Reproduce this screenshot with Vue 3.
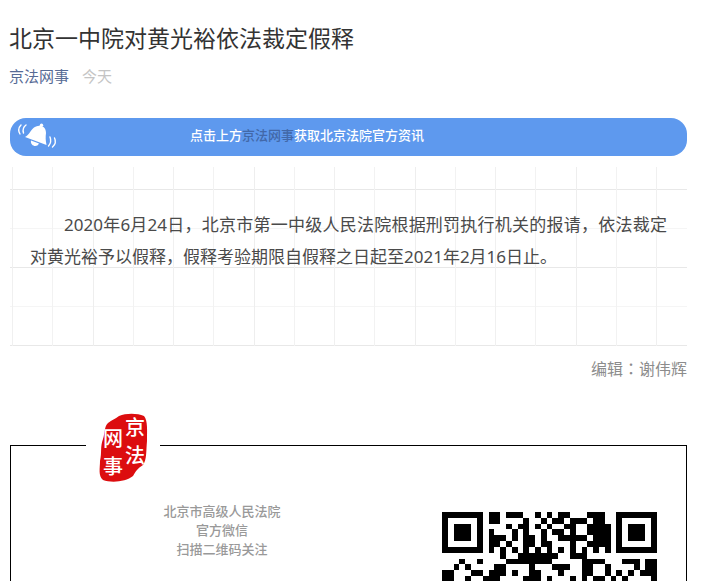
<template>
  <main class="article">
    <h1 class="title">北京一中院对黄光裕依法裁定假释</h1>
    <div class="meta">
      <a href="#" class="account">京法网事</a>
      <span class="date">今天</span>
    </div>

    <div class="banner">
      <svg class="bell" viewBox="0 0 42 30" aria-hidden="true">
        <g fill="#fff">
          <circle cx="24.5" cy="3.2" r="1.7" />
          <path d="M8 15 C13 13 13 7 19 4.5 C24 2.5 29 5 29 11 C28.5 15 28.5 18 29.5 23 Z" />
          <path d="M14 18.5 L22 21.5 C20 26 13 24 14 18.5 Z" />
        </g>
        <g fill="none" stroke="#fff" stroke-width="1.4" stroke-linecap="round">
          <path d="M4 3 Q0 7 3 12" />
          <path d="M9 3 Q5 6 6.5 11" />
          <path d="M33 15 Q35 20 31.5 24" />
          <path d="M37.5 16 Q40 21 35.5 25" />
        </g>
      </svg>
      <p class="banner-text">点击上方<a href="#">京法网事</a>获取北京法院官方资讯</p>
    </div>

    <section class="content">
      <p>
        2020年6月24日，北京市第一中级人民法院根据刑罚执行机关的报请，依法裁定对黄光裕予以假释，假释考验期限自假释之日起至2021年2月16日止。
      </p>
    </section>

    <p class="editor">编辑：谢伟辉</p>

    <section class="card">
      <div class="seal">
        <svg viewBox="0 0 48 70" role="img" aria-label="京法网事">
          <path
            d="M20 3 C27 0 38 0 45 3 C49 8 48 18 48 28 C47 38 48 46 44 52 C39 55 37 58 34 63 C27 69 12 70 4 67 C-1 63 1 55 1 48 C3 40 1 34 4 26 C6 20 5 14 9 10 C13 7 16 6 20 3 Z"
            fill="#dc0d0f"
          />
          <g class="seal-text">
            <text x="26" y="22">京</text>
            <text x="26" y="50">法</text>
            <text x="4" y="33">网</text>
            <text x="4" y="61">事</text>
          </g>
        </svg>
      </div>

      <div class="card-body">
        <p class="card-text">
          <span v-for="line in cardLines" :key="line">{{ line }}</span>
        </p>
        <div class="qr-box">
          <svg class="qr" viewBox="0 0 37 12" shape-rendering="crispEdges" role="img" aria-label="二维码">
            <path :d="qrPath" fill="#000" />
          </svg>
        </div>
      </div>
    </section>
  </main>
</template>

<script setup>
import { computed } from 'vue';

const cardLines = ['北京市高级人民法院', '官方微信', '扫描二维码关注'];

// dark modules of each row, by column
const qrRows = [
  [0, 1, 2, 3, 4, 5, 6, 8, 9, 11, 12, 13, 16, 18, 20, 21, 25, 26, 27, 30, 31, 32, 33, 34, 35, 36],
  [0, 6, 8, 9, 14, 17, 19, 20, 22, 23, 24, 26, 27, 30, 36],
  [0, 2, 3, 4, 6, 11, 13, 14, 16, 18, 21, 22, 25, 26, 27, 28, 30, 32, 33, 34, 36],
  [0, 2, 3, 4, 6, 8, 12, 14, 17, 19, 20, 22, 25, 26, 27, 28, 30, 32, 33, 34, 36],
  [0, 2, 3, 4, 6, 8, 9, 10, 12, 14, 15, 17, 20, 21, 22, 23, 24, 26, 27, 28, 30, 32, 33, 34, 36],
  [0, 6, 8, 9, 11, 14, 15, 17, 18, 22, 25, 26, 27, 28, 30, 36],
  [0, 1, 2, 3, 4, 5, 6, 8, 10, 12, 14, 16, 18, 20, 22, 24, 26, 28, 30, 31, 32, 33, 34, 35, 36],
  [10, 13, 14, 15, 16, 17, 18, 19, 22, 23, 24],
  [3, 6, 11, 12, 13, 14, 15, 16, 17, 18, 24, 25, 26, 27, 31, 32, 33, 35, 36],
  [2, 4, 9, 10, 15, 19, 20, 21, 24, 25, 28, 33, 35, 36],
  [0, 1, 5, 6, 8, 9, 10, 12, 15, 16, 20, 24, 25, 28, 30, 32, 34, 35, 36],
  [0, 1, 4, 7, 8, 9, 14, 15, 16, 18, 22, 24, 26, 27, 29, 31, 36],
];

const qrPath = computed(() =>
  qrRows.map((cols, y) => cols.map((x) => `M${x} ${y}h1v1h-1z`).join('')).join('')
);
</script>

<style>
body {
  margin: 0;
  background: #fff;
}
</style>

<style scoped>
.article {
  padding: 21px 17px 0 9px;
  font-family: 'Noto Sans CJK SC', sans-serif;
  color: #333;
}

.title {
  margin: 0;
  font-size: 23px;
  line-height: 32px;
  font-weight: 400;
}

.meta {
  display: flex;
  gap: 13px;
  margin-top: 11px;
  font-size: 15px;
  line-height: 24px;
}

.account {
  color: #576b95;
  text-decoration: none;
}

.date {
  color: #c4c4c4;
}

.banner {
  display: flex;
  align-items: center;
  height: 38px;
  margin: 30px 0 0 1px;
  border-radius: 16px;
  background: #5e99ee;
}

.bell {
  width: 42px;
  height: 30px;
  margin-left: 7px;
}

.banner-text {
  flex: 1;
  margin: 0 132px 4px 0;
  text-align: center;
  font-size: 13px;
  line-height: 20px;
  font-weight: 500;
  color: #fff;
}

.banner-text a {
  color: #4268a8;
  text-decoration: none;
}

.content {
  margin: 11px 0 0 1px;
  padding: 42px 20px 73px;
  background-image:
    linear-gradient(
      to right,
      transparent 2px,
      #f0f0f0 2px 3px,
      transparent 3px 42px,
      #f2f2f2 42px 43px,
      transparent 43px 83px,
      #eee 83px 84px,
      transparent 84px 123px,
      #f2f2f2 123px 124px,
      transparent 124px
    ),
    linear-gradient(
      transparent 22px,
      #e8e8e8 22px 23px,
      transparent 23px 61px,
      #f5f5f5 61px 62px,
      transparent 62px
    );
  background-size: 161px 100%, 100% 78px;
}

.content p {
  margin: 0;
  text-indent: 2em;
  text-align: justify;
  font-family: 'Noto Sans', 'Noto Sans CJK SC', sans-serif;
  font-size: 17px;
  line-height: 32px;
  color: #4a4a4a;
}

.editor {
  margin: 10px 0 0;
  text-align: right;
  font-family: 'Noto Sans CJK TC', 'Noto Sans CJK SC', sans-serif;
  font-size: 16px;
  line-height: 24px;
  color: #8c8c8c;
}

.card {
  margin: 65px 0 0 1px;
  border: 1px solid #000;
  border-bottom: 0;
}

.seal {
  display: flex;
  justify-content: center;
  width: 74px;
  height: 70px;
  margin: -33px 0 0 75px;
  background: #fff;
}

.seal svg {
  width: 48px;
  height: 70px;
  overflow: visible;
}

.seal-text {
  font-family: 'Noto Sans CJK SC', sans-serif;
  font-size: 20px;
  font-weight: 500;
  fill: #fff;
}

.card-body {
  display: grid;
  grid-template-columns: 5fr 3fr;
  align-items: start;
  padding-top: 18px;
}

.card-text {
  display: flex;
  flex-direction: column;
  margin: 0;
  text-align: center;
  font-size: 13px;
  line-height: 19px;
  font-weight: 500;
  color: #999;
}

.qr-box {
  padding: 11px 29px 0 9px;
}

.qr {
  display: block;
  width: 100%;
}
</style>
